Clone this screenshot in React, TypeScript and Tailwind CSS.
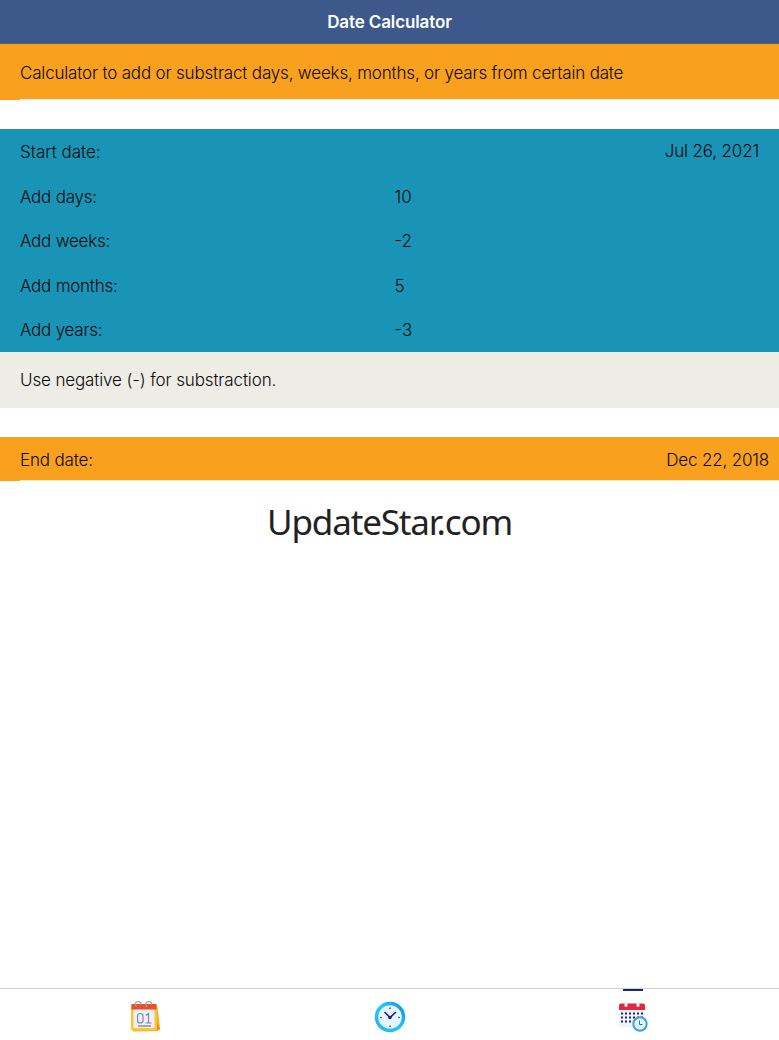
const fields = [
  { label: 'Add days:', value: '10' },
  { label: 'Add weeks:', value: '-2' },
  { label: 'Add months:', value: '5' },
  { label: 'Add years:', value: '-3' },
];

function CalendarIcon() {
  return (
    <svg className="w-8 h-8" viewBox="0 0 32 32" fill="none">
      <path d="M26 6h2.500l2.500 22-3 2-24 .5V28z" fill="#f9a91c" />
      <path d="M27 19l4 9-4 2z" fill="#e98a16" />
      <rect x="2" y="3" width="26" height="26.500" rx="1.500" fill="#fdc52f" />
      <rect x="4.500" y="6" width="21" height="21" fill="#eef1fa" />
      <path d="M3.500 3h23a1 1 0 0 1 1 1v4.500h-25V4a1 1 0 0 1 1-1z" fill="#e8502b" />
      <path d="M7.500 6C5 2 7 .6 9 .6s3.500 1.200 3 3.200M18 6c-2.500-4-.5-5.400 1.500-5.400S23 1.800 22.500 3.800" stroke="#a79aa2" strokeWidth="1.200" />
      <rect x="8.500" y="12.500" width="5.500" height="9.500" rx="2.600" stroke="#7c8296" strokeWidth="1.100" />
      <path d="M17 14.500l2.500-2V22M16.500 22h6" stroke="#7c8296" strokeWidth="1.100" />
      <path d="M9 25h13" stroke="#6e7488" strokeWidth="1.200" />
    </svg>
  );
}

function ClockIcon() {
  return (
    <svg className="w-8 h-8" viewBox="0 0 32 32" fill="none">
      <defs>
        <linearGradient id="ring" x1="4" y1="26" x2="28" y2="6" gradientUnits="userSpaceOnUse">
          <stop stopColor="#22b6f2" />
          <stop offset=".5" stopColor="#22c8fb" />
          <stop offset="1" stopColor="#159be5" />
        </linearGradient>
      </defs>
      <circle cx="16" cy="16" r="13.500" fill="#e4f6ff" stroke="url(#ring)" strokeWidth="3.400" />
      <path d="M16 16.500l-5-5M16 16.500l5.500-5" stroke="#1c1c74" strokeWidth="1.600" strokeLinecap="round" />
      <circle cx="16" cy="16.500" r="1.700" fill="#1c1c74" />
      <circle cx="16" cy="7.300" r=".8" fill="#1c1c74" />
      <circle cx="16" cy="25.200" r=".8" fill="#1c1c74" />
      <circle cx="7" cy="16.500" r=".8" fill="#1c1c74" />
      <circle cx="25" cy="16.500" r=".8" fill="#1c1c74" />
    </svg>
  );
}

function ScheduleIcon() {
  return (
    <svg className="w-8 h-8" viewBox="0 0 32 32" fill="none">
      <path d="M2 8h26v18H4a2 2 0 0 1-2-2z" fill="#edf2fb" />
      <path d="M4 2.500h22a2 2 0 0 1 2 2V9H2V4.500a2 2 0 0 1 2-2z" fill="#e5283f" />
      <rect x="7.500" y="1" width="3" height="5" rx="1.500" fill="#eee8ef" />
      <rect x="19.500" y="1" width="3" height="5" rx="1.500" fill="#eee8ef" />
      {[11.5, 15.5, 19.5].map((y) =>
        [4, 8, 12, 16, 20, 24].map((x) => (
          <rect key={`${x}-${y}`} x={x} y={y} width="2" height="2" fill="#25256f" />
        )),
      )}
      <circle cx="23" cy="23" r="6.700" fill="#e2f3ff" stroke="#3da0e6" strokeWidth="2" />
      <path d="M22.500 19.500v4h3" stroke="#5a627c" strokeWidth="1" />
    </svg>
  );
}

export default function App() {
  return (
    <div className="flex flex-col h-[1040px] bg-white text-[#0a0a0a] text-[17px] font-[350] font-['Inter',sans-serif]">
      <header className="h-11 shrink-0 flex items-center justify-center bg-[#3d598c] border-b border-[#5a5d70] pt-[3px]">
        <h1 className="text-[17px] font-semibold text-white tracking-[-0.12px]">Date Calculator</h1>
      </header>

      <section className="h-14 shrink-0 flex bg-[#f9a01e]">
        <div className="w-5"></div>
        <p className="flex-1 flex items-center border-b border-[#fbf3dc] pt-1 tracking-[-0.18px]">
          Calculator to add or substract days, weeks, months, or years from certain date
        </p>
      </section>

      <section className="mt-[29px] h-[223px] shrink-0 grid grid-rows-5 bg-[#1993b6] px-5 tracking-[-0.2px]">
        <div className="flex items-center justify-between pt-0.5">
          <span className="tracking-normal">Start date:</span>
          <span className="pb-0.5 tracking-[-0.15px]">Jul 26, 2021</span>
        </div>
        {fields.map((field) => (
          <div key={field.label} className="flex items-center pt-[3px]">
            <span className="w-[374.5px] tracking-[-0.24px]">{field.label}</span>
            <span className="tracking-normal">{field.value}</span>
          </div>
        ))}
      </section>

      <p className="h-14 shrink-0 flex items-center px-5 pt-0.5 bg-[#edece5] tracking-[-0.13px]">
        Use negative (-) for substraction.
      </p>

      <section className="mt-[29px] h-11 shrink-0 flex bg-[#f9a01e] tracking-[-0.17px]">
        <div className="w-5"></div>
        <div className="flex-1 flex items-center justify-between pr-2.5 pt-1 border-b border-[#f3efbf]">
          <span>End date:</span>
          <span>Dec 22, 2018</span>
        </div>
      </section>

      <div className="mt-4 text-center text-[35px] font-normal leading-[50px] text-[#222] tracking-[-1.15px] font-['Noto_Sans',sans-serif]">
        UpdateStar.com
      </div>

      <nav className="mt-auto h-[52px] shrink-0 flex justify-between border-t border-[#cfcfcf] pl-[129px] pr-[130px] pt-3">
        <CalendarIcon />
        <div className="pl-px">
          <ClockIcon />
        </div>
        <div className="relative">
          <div className="absolute -top-[12px] left-1.5 w-5 h-0.5 bg-[#23236f]"></div>
          <ScheduleIcon />
        </div>
      </nav>
    </div>
  );
}
